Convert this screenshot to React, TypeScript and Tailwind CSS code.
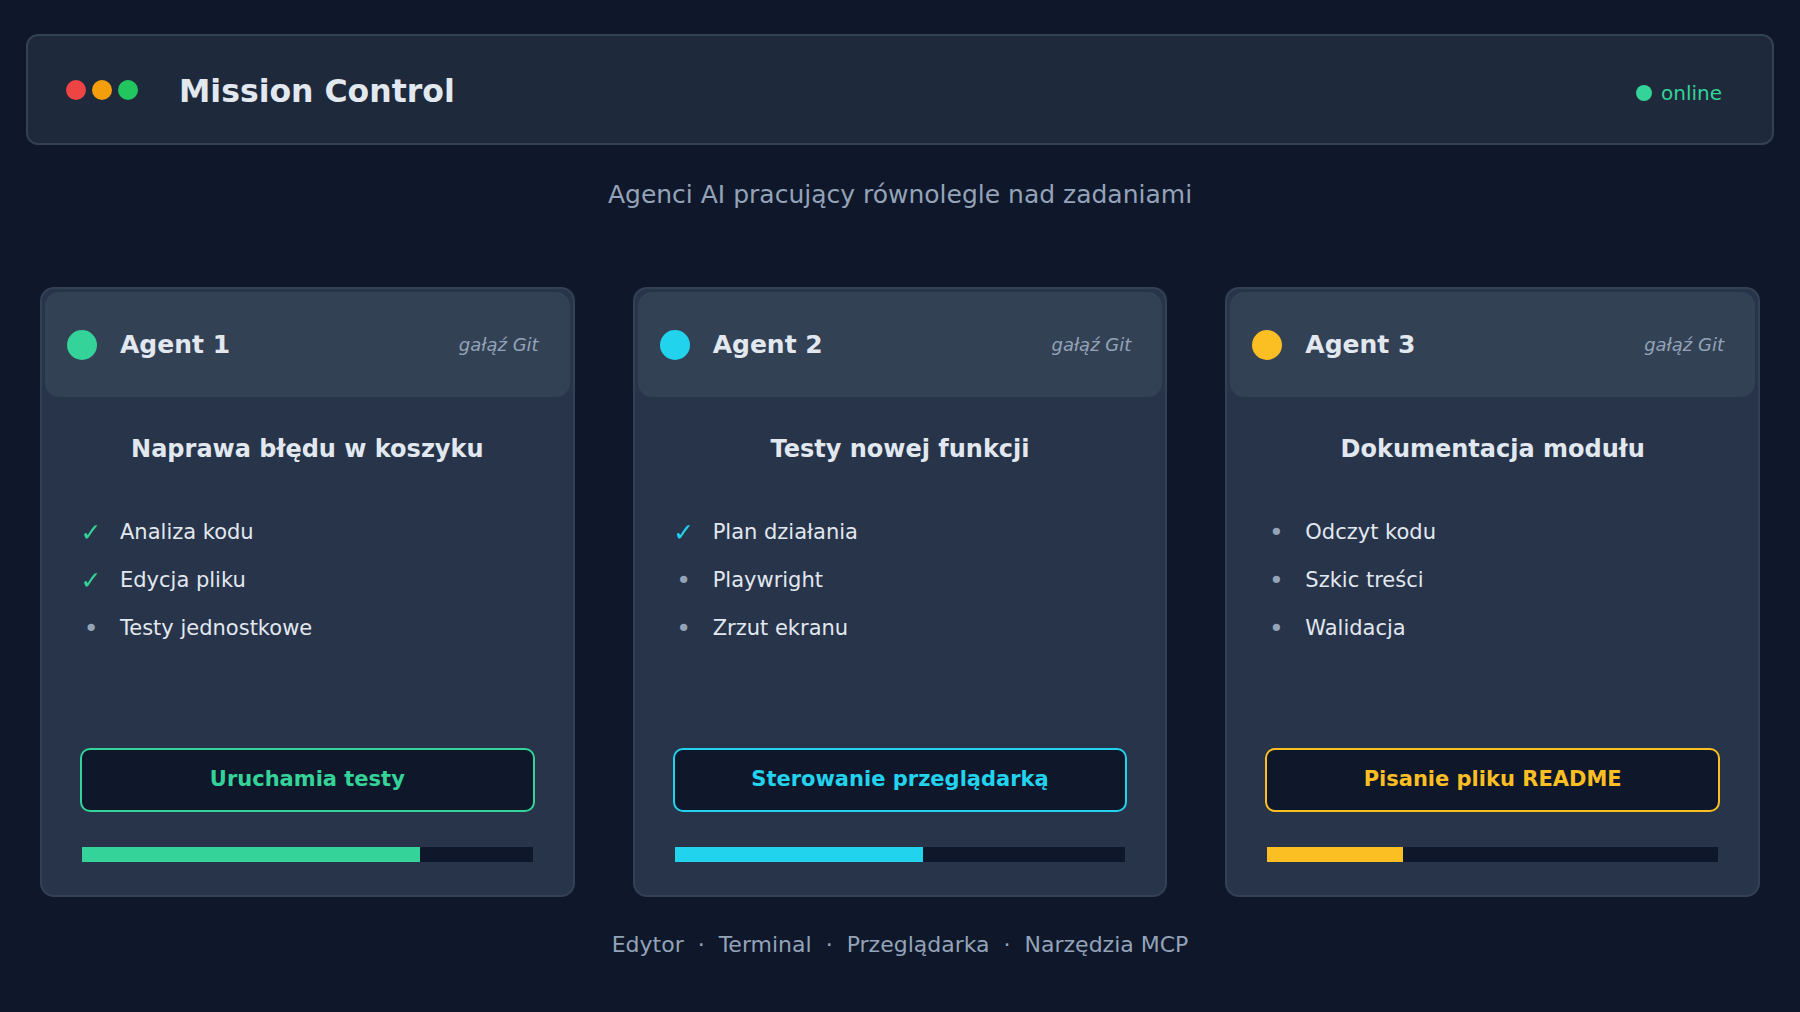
import React from 'react';

type Step = { label: string; done: boolean };

type Agent = {
  id: number;
  name: string;
  task: string;
  steps: Step[];
  action: string;
  progress: number;
  dot: string;
  text: string;
  border: string;
  fill: string;
};

const AGENTS: Agent[] = [
  {
    id: 1,
    name: 'Agent 1',
    task: 'Naprawa błędu w koszyku',
    steps: [
      { label: 'Analiza kodu', done: true },
      { label: 'Edycja pliku', done: true },
      { label: 'Testy jednostkowe', done: false },
    ],
    action: 'Uruchamia testy',
    progress: 75,
    dot: 'bg-[#34d399]',
    text: 'text-[#34d399]',
    border: 'border-[#34d399]',
    fill: 'bg-[#34d399]',
  },
  {
    id: 2,
    name: 'Agent 2',
    task: 'Testy nowej funkcji',
    steps: [
      { label: 'Plan działania', done: true },
      { label: 'Playwright', done: false },
      { label: 'Zrzut ekranu', done: false },
    ],
    action: 'Sterowanie przeglądarką',
    progress: 55,
    dot: 'bg-[#22d3ee]',
    text: 'text-[#22d3ee]',
    border: 'border-[#22d3ee]',
    fill: 'bg-[#22d3ee]',
  },
  {
    id: 3,
    name: 'Agent 3',
    task: 'Dokumentacja modułu',
    steps: [
      { label: 'Odczyt kodu', done: false },
      { label: 'Szkic treści', done: false },
      { label: 'Walidacja', done: false },
    ],
    action: 'Pisanie pliku README',
    progress: 30,
    dot: 'bg-[#fbbf24]',
    text: 'text-[#fbbf24]',
    border: 'border-[#fbbf24]',
    fill: 'bg-[#fbbf24]',
  },
];

const TOOLS = ['Edytor', 'Terminal', 'Przeglądarka', 'Narzędzia MCP'];

const AgentCard: React.FC<{ agent: Agent }> = ({ agent }) => (
  <div className="h-[610px] flex flex-col rounded-[14px] border-2 border-[#334155] bg-[#27344a] p-[3px]">
    {/* Card header */}
    <div className="h-[105px] shrink-0 flex items-center rounded-[14px] bg-[#334155] pl-[22px] pr-[31px]">
      <span className={`w-[30px] h-[30px] rounded-full ${agent.dot}`} />
      <span className="ml-[23px] text-[25px] font-bold text-[#e2e8f0]">{agent.name}</span>
      <span className="ml-auto text-[18px] italic text-[#94a3b8]">gałąź Git</span>
    </div>

    <h3 className="mt-[37px] text-center text-[24px] leading-[30px] font-bold text-[#e2e8f0]">{agent.task}</h3>

    {/* Steps */}
    <ul className="mt-[45px] pl-[32px]">
      {agent.steps.map((step) => (
        <li key={step.label} className="h-[48px] flex items-center">
          <span
            className={`w-[28px] text-center text-[25px] leading-[30px] ${step.done ? agent.text : 'text-[#94a3b8]'}`}
          >
            {step.done ? '✓' : '•'}
          </span>
          <span className="ml-[15px] text-[21px] text-[#e2e8f0]">{step.label}</span>
        </li>
      ))}
    </ul>

    <div
      className={`mt-auto mx-[35px] h-[64px] flex items-center justify-center rounded-[10px] border-2 bg-[#0f172a] ${agent.border}`}
    >
      <span className={`text-[21px] font-bold ${agent.text}`}>{agent.action}</span>
    </div>

    <div className="mt-[35px] mb-[30px] mx-[37px] h-[15px] bg-[#0f172a]">
      <div className={`h-full ${agent.fill}`} style={{ width: `${agent.progress}%` }} />
    </div>
  </div>
);

export default function App() {
  return (
    <div className="min-h-screen bg-[#0f172a] px-[26px] pt-[34px] font-['DejaVu_Sans',sans-serif]">
      {/* Top bar */}
      <header className="h-[111px] flex items-center rounded-[12px] border-2 border-[#334155] bg-[#1e293b] pl-[38px] pr-[50px]">
        <div className="flex gap-[6px]">
          <span className="w-[20px] h-[20px] rounded-full bg-[#ef4444]" />
          <span className="w-[20px] h-[20px] rounded-full bg-[#f59e0b]" />
          <span className="w-[20px] h-[20px] rounded-full bg-[#22c55e]" />
        </div>
        <h1 className="ml-[41px] mt-[5px] text-[31.5px] font-bold text-[#e2e8f0]">Mission Control</h1>
        <div className="ml-auto flex items-center pt-[6px]">
          <span className="w-[16px] h-[16px] rounded-full bg-[#34d399]" />
          <span className="ml-[9px] text-[20px] text-[#34d399]">online</span>
        </div>
      </header>

      <p className="mt-[35px] text-center text-[25px] leading-[30px] text-[#94a3b8]">
        Agenci AI pracujący równolegle nad zadaniami
      </p>

      <section className="mt-[77px] px-[14px] grid grid-cols-3 gap-[58px]">
        {AGENTS.map((agent) => (
          <AgentCard key={agent.id} agent={agent} />
        ))}
      </section>

      <footer className="mt-[33px] flex justify-center gap-[14px] text-[22px] leading-[30px] text-[#94a3b8]">
        {TOOLS.map((tool, i) => (
          <React.Fragment key={tool}>
            {i > 0 && <span>·</span>}
            <span>{tool}</span>
          </React.Fragment>
        ))}
      </footer>
    </div>
  );
}
